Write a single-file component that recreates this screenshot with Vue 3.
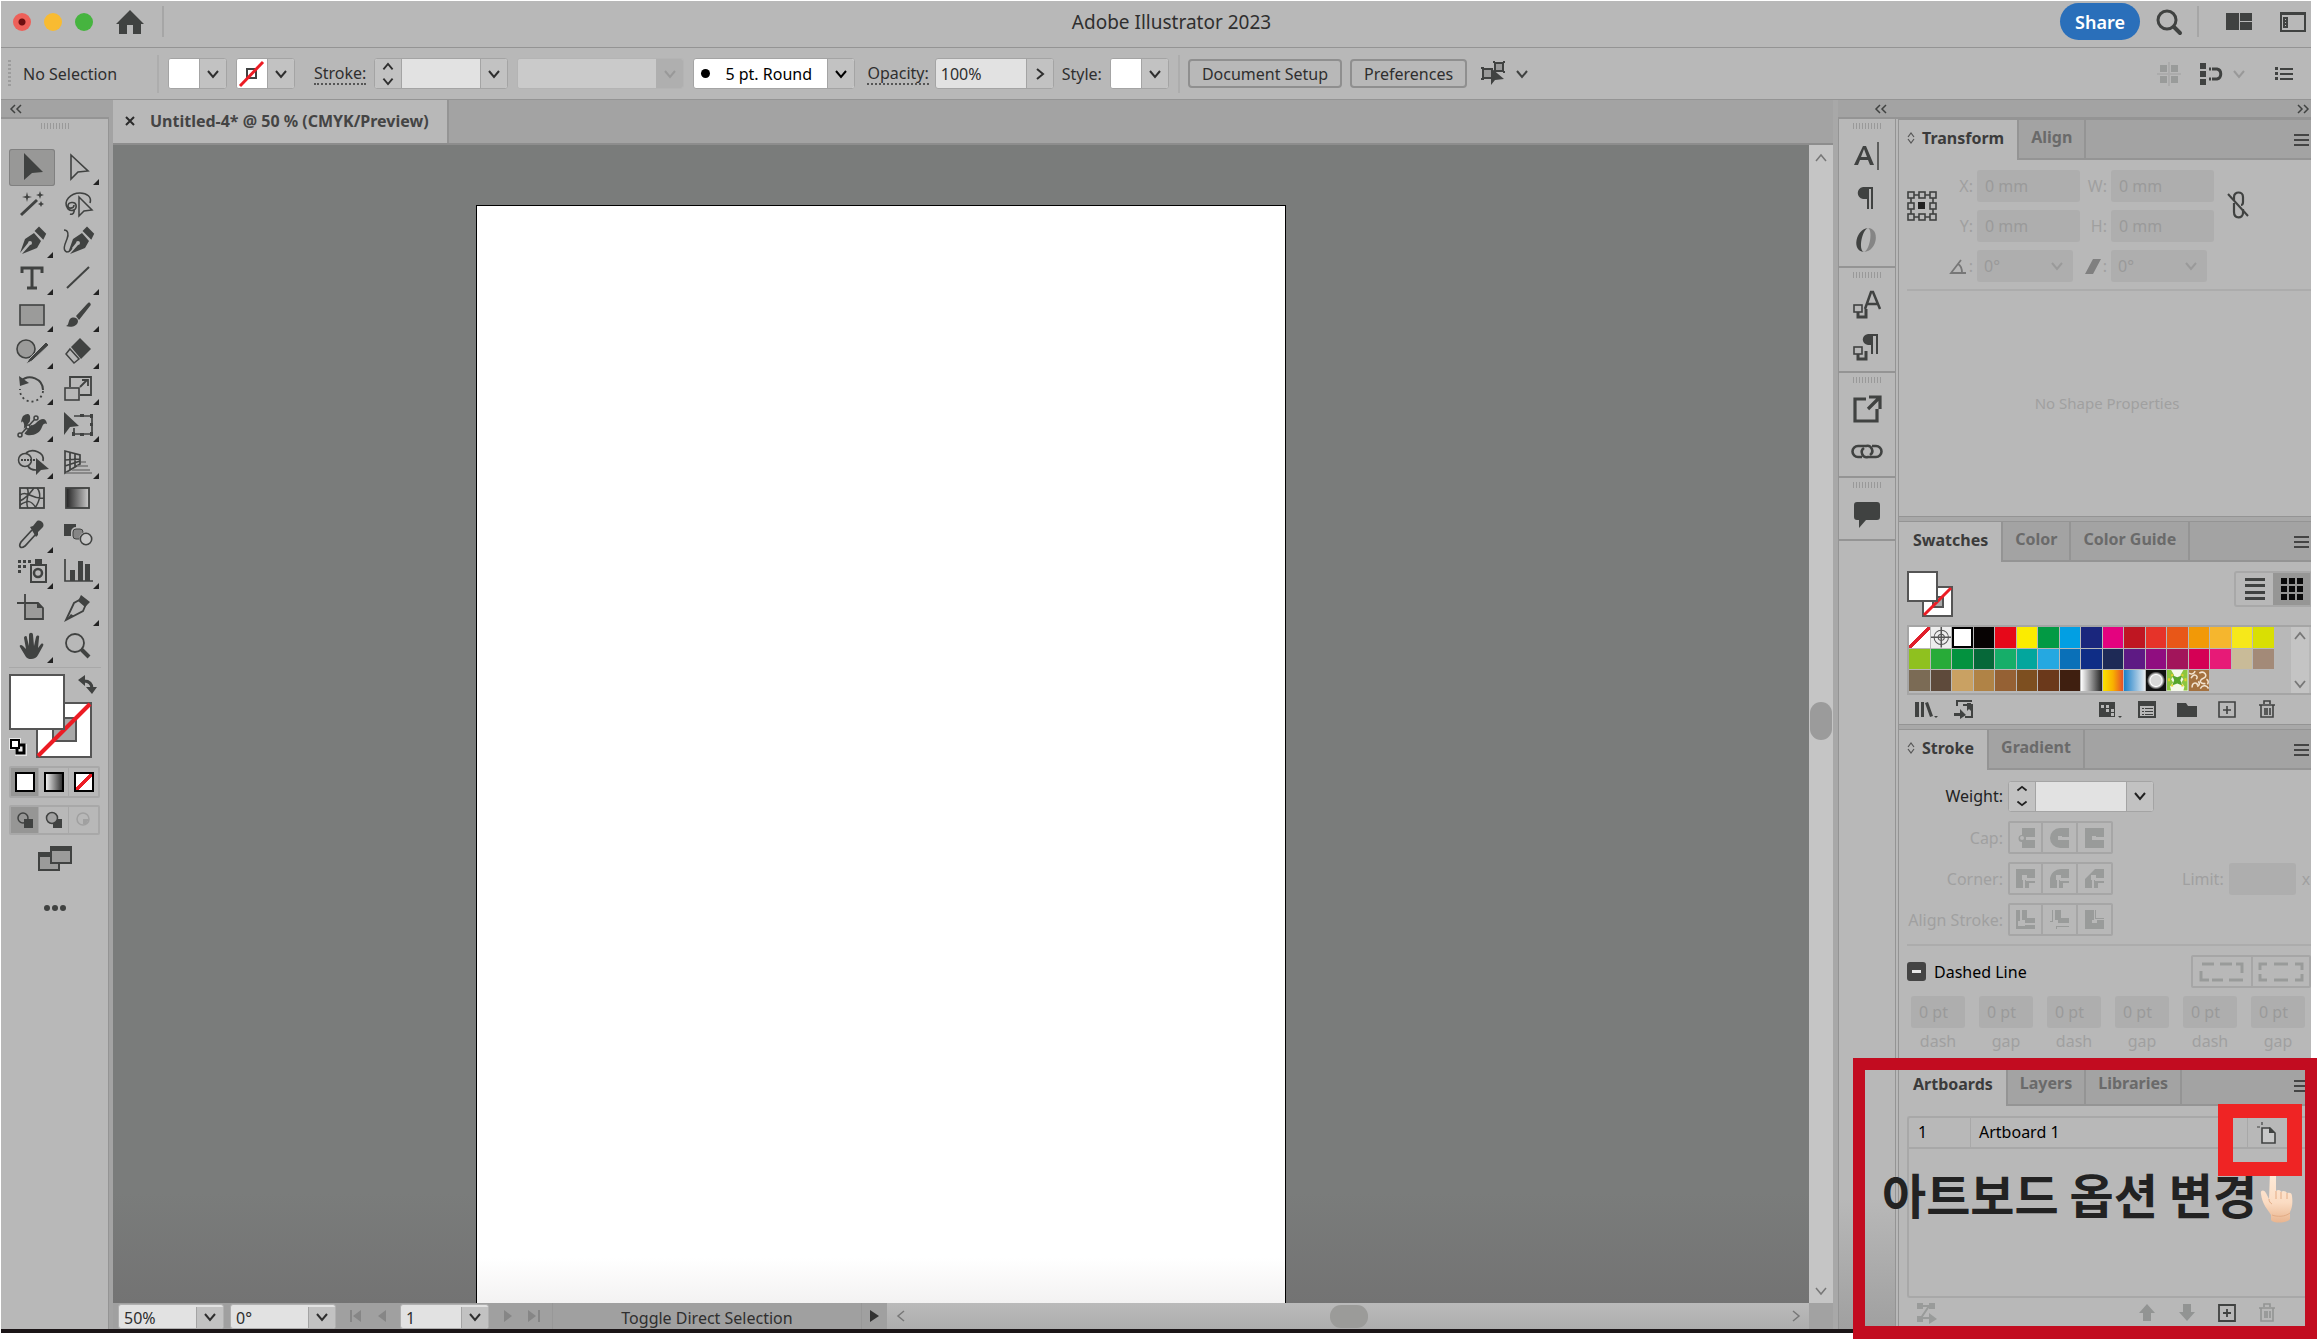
<script setup>
import { ref } from 'vue'

const chev = '<path d="M1 1l5 6 5-6" fill="none" stroke="currentColor" stroke-width="2"/>'

const D = '#404241'
const pen = '<path d="M19 9l7 8-4 7-15 6 8-9a2 2 0 1 0-2-2l-8 10 5-14z" fill="#404241"/><path d="M21 7l3-3 6 6-2 4z" fill="#404241" stroke="#404241" stroke-width="2"/>'

const tools = [
  { name: 'Selection', active: true, svg: `<path d="M9 3v27l8-7 11-1z" fill="${D}"/>` },
  { name: 'Direct Selection', more: true, svg: `<path d="M10 5v24l7-7 10-1z" fill="none" stroke="${D}" stroke-width="1.6"/>` },
  { name: 'Magic Wand', svg: `<path d="M6 28L22 13" stroke="${D}" stroke-width="3"/><path d="M12 5l1 4 4 1-4 1-1 4-1-4-4-1 4-1zM25 4l1 3 3 1-3 1-1 3-1-3-3-1 3-1zM26 14l1 2 2 1-2 1-1 2-1-2-2-1 2-1z" fill="${D}"/>` },
  { name: 'Lasso', svg: `<path d="M7 22C1 14 10 6 19 6c7 0 12 4 10 10M7 22c4 3 9 1 8-4-1-4-8-3-8 1 0 3 6 3 6-1M13 22c1 3-1 6-4 5" fill="none" stroke="${D}" stroke-width="1.6"/><path d="M18 10v19l5-5 8-1z" fill="#b8b8b8" stroke="${D}" stroke-width="1.5"/>` },
  { name: 'Pen', more: true, svg: pen },
  { name: 'Curvature', svg: `<g transform="translate(2 0)">${pen}</g><path d="M3 6c4 0 5 4 3 9S1 26 6 28c4 0 3-2 5-4" fill="none" stroke="${D}" stroke-width="1.5"/>` },
  { name: 'Type', more: true, svg: `<path d="M7 12V7h20v5M17 7v20M12 27h10" fill="none" stroke="${D}" stroke-width="3"/>` },
  { name: 'Line Segment', more: true, svg: `<path d="M6 27L28 6" stroke="${D}" stroke-width="2"/>` },
  { name: 'Rectangle', more: true, svg: `<rect x="5" y="7" width="24" height="20" fill="#9b9b9a" stroke="${D}" stroke-width="1.6"/>` },
  { name: 'Paintbrush', more: true, svg: `<path d="M29 5c1 1 1 2 0 3L18 22l-3-4L26 6c1-1 2-2 3-1z" fill="${D}"/><path d="M5 28c3-1 2-4 4-7 3-3 8-1 8 2 0 5-7 7-12 5z" fill="${D}"/>` },
  { name: 'Shaper', more: true, svg: `<circle cx="11" cy="15" r="9" fill="#9b9b9a" stroke="${D}" stroke-width="1.6"/><path d="M14 25L31 8l3 3-17 16-6 3z" fill="${D}" stroke="#b8b8b8"/>` },
  { name: 'Eraser', more: true, svg: `<path d="M10 13L19 4l11 11-10 10z" fill="${D}"/><path d="M9 15l9 10-5 4-8-9z" fill="none" stroke="${D}" stroke-width="1.5"/>` },
  { name: 'Rotate', more: true, svg: `<path d="M6 10c8-8 22-2 22 9" fill="none" stroke="${D}" stroke-width="2"/><path d="M4 5l1 10 9-3z" fill="${D}"/><path d="M28 20A11 11 0 0 1 5 18" fill="none" stroke="${D}" stroke-width="1.8" stroke-dasharray="2 3"/>` },
  { name: 'Scale', more: true, svg: `<path d="M9 16V6h21v18H19" fill="none" stroke="${D}" stroke-width="1.8"/><rect x="4" y="17" width="14" height="12" fill="none" stroke="${D}" stroke-width="1.6"/><path d="M19 16l7-7M21 9h6v6" fill="none" stroke="${D}" stroke-width="1.8"/>` },
  { name: 'Width', more: true, svg: `<path d="M8 8c5-4 8-2 7 4-1 5 2 7 6 3 5-5 10-6 11 1-1-1-4-1-5 3-2 6-8 9-15 8-6-2-2-7-3-11-1-3-2-3-3-1 0-3 1-5 2-7z" fill="${D}"/><path d="M6 27L20 10" stroke="#b8b8b8" stroke-width="3.5"/><path d="M6 26L20 11" stroke="${D}" stroke-width="1.5"/><g fill="#b8b8b8" stroke="${D}" stroke-width="1.5"><circle cx="5" cy="27" r="2"/><circle cx="13" cy="19" r="2"/><circle cx="21" cy="10" r="2"/></g>` },
  { name: 'Free Transform', more: true, svg: `<path d="M13 8h18v18H13v-6" fill="none" stroke="${D}" stroke-width="1.7"/><path d="M29 6h3v4h-3zM29 15h3v3h-3zM29 24h3v4h-3zM19 6h4v3h-4zM19 25h4v3h-4zM11 24h3v4h-3z" fill="${D}"/><path d="M3 4v23l6-8 9-1z" fill="${D}"/>` },
  { name: 'Shape Builder', more: true, svg: `<circle cx="10" cy="15" r="6.500" fill="none" stroke="${D}" stroke-width="1.5"/><path d="M11 8c6-5 19-1 17 8M13 21c1 2 4 4 8 4" fill="none" stroke="${D}" stroke-width="1.7"/><path d="M6 15h14" stroke="${D}" stroke-width="2" stroke-dasharray="2 1"/><path d="M21 13v17l5-5 8-1z" fill="${D}"/>` },
  { name: 'Perspective Grid', more: true, svg: `<path d="M4 6v22l15-9v-9zM4 15l15-1M4 21l15-5M9 7v18M14 9v13" fill="none" stroke="${D}" stroke-width="1.7"/><path d="M20 17h5M16 21h11M11 25h18M5 28h26" stroke="#777" stroke-width="1.5"/>` },
  { name: 'Mesh', svg: `<rect x="5" y="7" width="24" height="20" fill="none" stroke="${D}" stroke-width="1.8"/><path d="M12 7c4 6-3 12 1 20M22 7c5 6 2 14-2 20M5 14c8-5 12 5 24 3M5 24c8-5 11-5 16 3M5 20c8-4 10-8 14-13" fill="none" stroke="${D}" stroke-width="1.5"/>` },
  { name: 'Gradient', svg: `<defs><linearGradient id="gt"><stop offset="0" stop-color="#222"/><stop offset="1" stop-color="#ccc"/></linearGradient></defs><rect x="5" y="7" width="23" height="20" fill="url(#gt)" stroke="${D}" stroke-width="1.8"/>` },
  { name: 'Eyedropper', more: true, svg: `<path d="M17 12L6 24c-3 5 0 7 4 4l11-12" fill="none" stroke="${D}" stroke-width="1.7"/><path d="M15 9l3-1 4-5c4-2 8 3 6 6l-5 5 0 3-2 2z" fill="${D}"/>` },
  { name: 'Blend', svg: `<path d="M3 6h12v12H3z" fill="${D}"/><rect x="11" y="10" width="12" height="12" rx="4" fill="#858585" stroke="#b8b8b8" stroke-width="2"/><rect x="12" y="11" width="10" height="10" rx="3" fill="none" stroke="${D}"/><circle cx="25" cy="21" r="7" fill="#b8b8b8"/><circle cx="25" cy="21" r="5.700" fill="#c6c6c6" stroke="${D}" stroke-width="1.6"/>` },
  { name: 'Symbol Sprayer', more: true, svg: `<path d="M16 10h15v17H16z" fill="none" stroke="${D}" stroke-width="2"/><path d="M20 4h7v6h-7z" fill="${D}"/><circle cx="23" cy="18" r="4" fill="none" stroke="${D}" stroke-width="2.500"/><g fill="${D}"><path d="M3 5h3v3H3zM8 5h3v3H8zM13 5h3v3h-3zM3 10h3v3H3zM8 10h3v3H8zM3 15h3v3H3z"/></g>` },
  { name: 'Column Graph', more: true, svg: `<path d="M4 4v22h28" fill="none" stroke="${D}" stroke-width="1.700"/><path d="M9 15h5v11H9zM17 6h5v20h-5zM24 9h5v17h-5z" fill="${D}"/>` },
  { name: 'Artboard', svg: `<path d="M10 2v9M2 11h7" stroke="${D}" stroke-width="1.8"/><path d="M10 11h13l5 5v11H10z" fill="#9b9b9a" stroke="${D}" stroke-width="1.800"/><path d="M22 11v5h6z" fill="${D}"/>` },
  { name: 'Slice', more: true, svg: `<path d="M5 28l8-17 7-4 5 5-3 7z" fill="none" stroke="${D}" stroke-width="1.8"/><path d="M20 3l9 7-5 5-7-6zM5 28l5-6 3 2z" fill="${D}"/>` },
  { name: 'Hand', more: true, svg: `<path d="M11 28L5 18c-1-2 1-3 3-1l3 3L9 9c0-2 3-3 3 0l2 8V6c0-3 4-3 4 0l1 11 2-9c1-2 4-2 3 1l-1 10 3-4c2-1 3 0 2 2l-5 9c-2 5-10 5-12 2z" fill="${D}"/>` },
  { name: 'Zoom', svg: `<circle cx="14" cy="14" r="9" fill="none" stroke="${D}" stroke-width="1.8"/><path d="M20 20l8 8" stroke="${D}" stroke-width="4"/>` },
]

const strip = [
  [
    { name: 'Character', svg: `<path d="M4 26L13 7h3l8 19h-4l-2-5h-8l-2 5zM11 18h6l-3-8z" fill="${D}"/><path d="M28 3v28" stroke="${D}" stroke-width="1.5"/>` },
    { name: 'Paragraph', svg: `<path d="M16 6h7v22h-2V8h-2v20h-2V18h-4c-7-1-7-11 0-12z" fill="${D}"/>` },
    { name: 'OpenType', svg: `<path d="M18 5C6 6 1 28 14 29c-6-2-2-22 4-24z" fill="${D}"/><path d="M18 5c12 0 10 23-4 24 6-2 9-22 4-24z" fill="#858585"/>` },
  ],
  [
    { name: 'Character Styles', svg: `<path d="M8 22v7h8v-8" fill="none" stroke="${D}" stroke-width="3"/><rect x="4" y="17" width="8" height="7" fill="#b8b8b8" stroke="${D}" stroke-width="1.6"/><path d="M15 21l6-17h2l7 17M17 16h10" fill="none" stroke="${D}" stroke-width="2.500"/>` },
    { name: 'Paragraph Styles', svg: `<path d="M8 22v7h8v-8" fill="none" stroke="${D}" stroke-width="3"/><rect x="4" y="17" width="8" height="7" fill="#b8b8b8" stroke="${D}" stroke-width="1.6"/><path d="M18 4h10v20h-2V6h-3v18h-2V15h-3c-7-1-7-10 0-11z" fill="${D}"/>` },
  ],
  [
    { name: 'Asset Export', svg: `<path d="M16 6H5v22h22V16" fill="none" stroke="${D}" stroke-width="3.200"/><path d="M19 4h11v12M29 5L18 16" fill="none" stroke="${D}" stroke-width="3.200"/>` },
    { name: 'Links', svg: `<g fill="none" stroke="${D}" stroke-width="2.600"><path d="M12 22H8a5 5 0 0 1 0-11h8a5 5 0 0 1 4 9"/><path d="M22 11h4a5 5 0 0 1 0 11h-8a5 5 0 0 1-4-9"/></g>` },
  ],
  [
    { name: 'Comments', svg: `<path d="M7 4h20a3 3 0 0 1 3 3v12a3 3 0 0 1-3 3H16l-7 8v-8H7a3 3 0 0 1-3-3V7a3 3 0 0 1 3-3z" fill="${D}"/>` },
  ],
]

const swatches = [
  'none', 'reg', '#ffffff', '#070303', '#e60819', '#fbec00', '#029a44', '#029fe3', '#1a267d', '#e4027f', '#bf1622', '#e63329', '#e85718', '#f29907', '#f5b62e', '#f6e81a', '#d9df03',
  '#8fc11f', '#28ab38', '#03923f', '#066839', '#16ae69', '#03a69d', '#25a8e1', '#0a70b8', '#0f2d86', '#1e2a56', '#5e1a84', '#900d80', '#a2155b', '#d50055', '#e71a77', '#c9bb98', '#a38a78',
  '#7b6b55', '#5e4a3b', '#c9a163', '#b08346', '#956134', '#7d4f20', '#6b391b', '#3f1f10', 'fade', 'sun', 'sky', 'dot', 'leaf', 'swirl',
]
const isHex = (s) => s.startsWith('#')

const strokeRows = [
  { label: 'Cap:', icons: [
    ['Butt Cap', '<path d="M6 1h13v9H10v3h9v8H6v-6a3 3 0 1 1 0-7z"/><circle cx="6" cy="11" r="2" fill="#b8b8b8"/>'],
    ['Round Cap', '<path d="M19 1h-9a10 10 0 0 0 0 20h9v-8H10v-3h9z"/><path d="M8 9h4v4H8z" fill="#b8b8b8"/>'],
    ['Projecting Cap', '<path d="M0 1h19v9H10v3h9v8H0z"/><path d="M7 9h4v4H7z" fill="#b8b8b8"/>']] },
  { label: 'Corner:', icons: [
    ['Miter Join', '<path d="M0 1h19v9H10v3h9v2h-6v5H9v-8H7v8H0z"/><path d="M6 7h5v5H6z" fill="#b8b8b8"/>'],
    ['Round Join', '<path d="M0 20v-8A11 11 0 0 1 12 1h7v9H10v3h9v2h-6v5H9v-8H7v8z"/><path d="M6 7h5v5H6z" fill="#b8b8b8"/>'],
    ['Bevel Join', '<path d="M0 20v-9L10 1h9v9H10v3h9v2h-6v5H9v-8H7v8z"/><path d="M6 7h5v5H6z" fill="#b8b8b8"/>']] },
  { label: 'Align Stroke:', icons: [
    ['Align Center', '<path d="M0 1h4v11H2v5h7v-1h10v4H0zM6 1h5v8h8v5H9v-3H6z"/>'],
    ['Align Inside', '<path d="M5 1h6v8h8v5H8v-3H5zM2 1h1v12h-3v7h6v-3h13v1H7v2H0v-8h2z"/>'],
    ['Align Outside', '<path d="M0 1h9v10H7v3h5v-3h7v9H0zM10 1h1v8h8v1h-9z"/>']] },
]
const dashes = ['dash', 'gap', 'dash', 'gap', 'dash', 'gap']

const stroke = ref('')
const weight = ref('')
const opacity = ref('100%')

const swatchFooter = [
  ['Swatch Libraries', '<path d="M1 2h4v15H1zM7 2h3v15H7zM11 3l3-1 5 14-3 1z"/>'],
  ['Add to Library', '<path d="M3 6V1h15M9 5h9v12h-7" fill="none" stroke="currentColor" stroke-width="2"/><path d="M0 13h6V9l6 6-6 4v-3H0zM13 3h4v8l-2-2-2 2z"/>'],
  ['Show Swatch Kinds', '<path d="M1 2h16v15H1z"/><path d="M3 5h3v3H3zM8 5h3v3H8zM13 9h3v3h-3zM8 9h3v3H8zM13 13h3v3h-3z" fill="#b8b8b8"/>'],
  ['Swatch Options', '<path d="M1 2h16v15H1z" fill="none" stroke="currentColor" stroke-width="2"/><path d="M1 2h16v4H1zM4 8h2v1H4zM7 8h8v1H7zM4 11h2v1H4zM7 11h8v1H7zM4 14h2v1H4zM7 14h8v1H7z"/>'],
  ['New Color Group', '<path d="M-1 3h9l2 3h9v11H-1z"/>'],
  ['New Swatch', '<path d="M1 2h16v15H1zM9 6v8M5 10h8" fill="none" stroke="currentColor" stroke-width="1.600"/>'],
  ['Delete Swatch', '<path d="M1 5h16M6 4V1h6v3M3 5v12h12V5M7 8v7M9 8v7M12 8v7" fill="none" stroke="currentColor" stroke-width="1.600"/>'],
]
</script>

<template>
  <div class="app">
    <header class="title">
      <div class="lights"><i class="close"></i><i class="min"></i><i class="max"></i></div>
      <button class="home" aria-label="Home"><svg width="28" height="26" viewBox="0 0 28 26"><path d="M14 1l14 14h-3v10h-8v-9h-6v9H3V15H0z" :fill="D" /></svg></button>
      <span class="vr"></span>
      <h1>Adobe Illustrator 2023</h1>
      <div class="title-right">
        <button class="share">Share</button>
        <button class="search" aria-label="Search"><svg width="26" height="26" viewBox="0 0 26 26"><circle cx="11" cy="11" r="9" fill="none" :stroke="D" stroke-width="3" /><path d="M18 18l6 6" :stroke="D" stroke-width="4" stroke-linecap="round" /></svg></button>
        <span class="vr"></span>
        <button class="workspace" aria-label="Arrange Documents"><svg width="26" height="18" viewBox="0 0 26 18"><path d="M0 0h13v17H0zM14 0h12v8H14zM14 9h12v8H14z" :fill="D" /></svg></button>
        <button class="panelbtn" aria-label="Switch Workspace"><svg width="26" height="20" viewBox="0 0 26 20"><path d="M1 1h24v18H1z" fill="none" :stroke="D" stroke-width="2" /><path d="M1 0h24v3H1zM3 5h5v11H3z" :fill="D" /><path d="M5 7h1v1H5zM5 10h1v1H5zM5 13h1v1H5z" fill="#b8b8b8" /></svg></button>
      </div>
    </header>

    <div class="control">
      <span class="grip-v"></span>
      <span class="nosel">No Selection</span>
      <span class="vr tall"></span>
      <div class="combo sw"><button class="chip" aria-label="Fill"></button><button class="dd" aria-label="Fill options"><svg viewBox="0 0 12 8" v-html="chev"></svg></button></div>
      <div class="combo sw"><button class="chip" aria-label="Stroke color"><svg width="30" height="29" viewBox="0 0 30 29"><path d="M10 10h9v9h-9z" fill="none" :stroke="D" stroke-width="2" /><path d="M3 27L26 3" stroke="#ec1c24" stroke-width="3" /></svg></button><button class="dd" aria-label="Stroke options"><svg viewBox="0 0 12 8" v-html="chev"></svg></button></div>
      <label class="dotted l-stroke" for="sw">Stroke:</label>
      <div class="combo w-stroke"><button class="step" aria-label="Step stroke weight"><svg viewBox="0 0 12 24"><path d="M1 7l5-6 5 6M1 17l5 6 5-6" fill="none" stroke="currentColor" stroke-width="2" /></svg></button><input id="sw" v-model="stroke"><button class="dd" aria-label="Stroke weights"><svg viewBox="0 0 12 8" v-html="chev"></svg></button></div>
      <div class="combo off w-profile"><input aria-label="Width profile" disabled><button class="dd" aria-label="Profiles" disabled><svg viewBox="0 0 12 8" v-html="chev"></svg></button></div>
      <div class="combo w-brush"><i class="bullet"></i><select aria-label="Brush definition"><option>5 pt. Round</option></select><span class="dd"><svg viewBox="0 0 12 8" v-html="chev"></svg></span></div>
      <label class="dotted l-opacity" for="op">Opacity:</label>
      <div class="combo w-opacity"><input id="op" v-model="opacity"><button class="dd" aria-label="Opacity slider"><svg class="side" viewBox="0 0 8 12"><path d="M1 1l6 5-6 5" fill="none" stroke="currentColor" stroke-width="2" /></svg></button></div>
      <span class="l-style">Style:</span>
      <div class="combo sw"><button class="chip" aria-label="Style"></button><button class="dd" aria-label="Graphic styles"><svg viewBox="0 0 12 8" v-html="chev"></svg></button></div>
      <span class="vr tall"></span>
      <button class="plain b-doc">Document Setup</button>
      <button class="plain b-pref">Preferences</button>
      <button class="isolate" aria-label="Select Similar"><svg width="50" height="28" viewBox="0 0 50 28"><path d="M2 9h9v9H2zM14 3h8v8h-8z" fill="#999" :stroke="D" stroke-width="2" /><path d="M0 7h3v2H0zM0 18h3v2H0zM12 1h2v2h-2zM22 1h2v2h-2zM22 11h2v2h-2z" :fill="D" /><path d="M10 8v17l4-5 9-1z" :fill="D" /><path d="M36 11l5 6 5-6" fill="none" :stroke="D" stroke-width="2" /></svg></button>
      <div class="control-right">
        <svg width="24" height="24" viewBox="0 0 24 24"><path d="M3 3h7v7H3zM14 3h7v7h-7zM3 14h7v7H3zM14 14h7v7h-7z" fill="#999b9a" /><path d="M12 0v24M0 12h24" stroke="#acacac" stroke-width="2" /></svg>
        <svg width="24" height="24" viewBox="0 0 24 24"><path d="M1 1h6v6H1zM1 9h6v6H1zM1 17h6v6H1z" :fill="D" /><path d="M10 7h8c5 1 5 9 0 10h-8" fill="none" :stroke="D" stroke-width="3" /><path d="M12 5h1v4h-1zM12 15h1v4h-1z" fill="#b8b8b8" /></svg>
        <svg class="faint" width="12" height="8" viewBox="0 0 12 8" v-html="chev"></svg>
        <svg class="list" width="18" height="14" viewBox="0 0 18 14"><path d="M0 0h3v3H0zM0 5h3v3H0zM0 10h3v3H0zM5 1h13v2H5zM5 6h13v2H5zM5 11h13v2H5z" :fill="D" /></svg>
      </div>
    </div>

    <div class="main">
      <aside class="toolbar">
        <div class="collapse"><svg width="12" height="8" viewBox="0 0 12 8"><path d="M5 0L1 4l4 4M11 0L7 4l4 4" fill="none" :stroke="D" stroke-width="1.5" /></svg></div>
        <span class="grip"></span>
        <div class="tools">
          <button v-for="t in tools" :key="t.name" :aria-label="t.name" :class="{ active: t.active, more: t.more }"><svg width="34" height="34" viewBox="0 0 34 34" v-html="t.svg"></svg></button>
        </div>
        <div class="colors">
          <svg width="90" height="86" viewBox="0 0 90 86">
            <rect x="28" y="29" width="54" height="54" fill="#fff" stroke="#555" stroke-width="2" /><rect x="44" y="44" width="23" height="23" fill="#a8a8a8" stroke="#555" stroke-width="2" /><path d="M29 82L81 30" stroke="#ec1c24" stroke-width="4" />
            <rect x="1" y="1" width="54" height="54" fill="#fff" stroke="#555" stroke-width="2" />
            <path d="M75 7c6 0 8 3 8 8" fill="none" :stroke="D" stroke-width="3" /><path d="M69 6l7-5v11zM77 13h11l-5 7z" :fill="D" />
            <path d="M0 64h12v6h6v12H6v-6H0z" fill="#e6e6e6" /><path d="M8 71h7v8H8z" fill="none" stroke="#000" stroke-width="3" /><path d="M2 66h8v8H2z" fill="#fff" stroke="#000" stroke-width="2" />
          </svg>
        </div>
        <div class="modes">
          <button class="active" aria-label="Color"><i class="m-solid"></i></button><button aria-label="Gradient"><i class="m-grad"></i></button><button aria-label="None"><i class="m-none"></i></button>
        </div>
        <div class="modes draw">
          <button class="active" aria-label="Draw Normal"><svg width="16" height="16" viewBox="0 0 16 16"><circle cx="6" cy="6" r="5" fill="none" :stroke="D" stroke-width="1.500" /><path d="M7 7h9v9H7z" :fill="D" /></svg></button>
          <button aria-label="Draw Behind"><svg width="16" height="16" viewBox="0 0 16 16"><path d="M7 7h9v9H7z" :fill="D" /><circle cx="6" cy="6" r="5.500" fill="#a2a2a2" :stroke="D" stroke-width="1.500" /></svg></button>
          <button aria-label="Draw Inside" disabled><svg width="16" height="16" viewBox="0 0 16 16"><circle cx="7" cy="7" r="6" fill="none" stroke="#a0a0a0" stroke-width="1.500" /><path d="M7 7h6l-3 5H7z" fill="#a0a0a0" /></svg></button>
        </div>
        <button class="screen" aria-label="Screen Mode"><svg width="34" height="26" viewBox="0 0 34 26"><path d="M1 8h20v16H1z" fill="#9b9b9a" :stroke="D" stroke-width="2" /><path d="M0 6h12v5H0z" :fill="D" /><path d="M13 2h20v15H13z" fill="#9b9b9a" :stroke="D" stroke-width="2" /><path d="M12 0h22v5H12z" :fill="D" /></svg></button>
        <button class="dots" aria-label="Edit Toolbar"><i></i><i></i><i></i></button>
      </aside>

      <section class="doc">
        <div class="tabs"><div class="tab"><button aria-label="Close"><svg width="10" height="10" viewBox="0 0 10 10"><path d="M1 1l8 8M9 1L1 9" stroke="#2b2b2b" stroke-width="2" /></svg></button><span>Untitled-4* @ 50 % (CMYK/Preview)</span></div></div>
        <div class="view">
          <div class="canvas"><div class="artboard"></div></div>
          <div class="vscroll"><svg width="12" height="8" viewBox="0 0 12 8"><path d="M1 7l5-6 5 6" fill="none" stroke="#777" stroke-width="1.500" /></svg><i></i><svg width="12" height="8" viewBox="0 0 12 8"><path d="M1 1l5 6 5-6" fill="none" stroke="#777" stroke-width="1.500" /></svg></div>
        </div>
        <div class="status">
          <div class="combo s1"><select aria-label="Zoom level"><option>50%</option></select><span class="dd"><svg viewBox="0 0 12 8" v-html="chev"></svg></span></div>
          <div class="combo s1"><select aria-label="Rotate view"><option>0°</option></select><span class="dd"><svg viewBox="0 0 12 8" v-html="chev"></svg></span></div>
          <svg class="nav" width="38" height="12" viewBox="0 0 38 12"><path d="M1 0h2v12H1zM12 0v12L4 6zM37 0v12l-8-6z" fill="#868686" /></svg>
          <div class="combo s2"><select aria-label="Artboard number"><option>1</option></select><span class="dd"><svg viewBox="0 0 12 8" v-html="chev"></svg></span></div>
          <svg class="nav" width="38" height="12" viewBox="0 0 38 12"><path d="M1 0v12l8-6zM25 0v12l8-6zM35 0h2v12h-2z" fill="#868686" /></svg>
          <span class="tool-name">Toggle Direct Selection</span>
          <svg class="play" width="9" height="12" viewBox="0 0 9 12"><path d="M0 0v12l9-6z" fill="#333" /></svg>
          <div class="hscroll"><svg width="8" height="12" viewBox="0 0 8 12"><path d="M7 1L1 6l6 5" fill="none" stroke="#777" stroke-width="1.500" /></svg><i></i><svg width="8" height="12" viewBox="0 0 8 12"><path d="M1 1l6 5-6 5" fill="none" stroke="#777" stroke-width="1.500" /></svg></div>
        </div>
      </section>

      <aside class="dock">
        <div class="collapse both"><svg width="12" height="8" viewBox="0 0 12 8"><path d="M5 0L1 4l4 4M11 0L7 4l4 4" fill="none" :stroke="D" stroke-width="1.5" /></svg><svg width="12" height="8" viewBox="0 0 12 8"><path d="M1 0l4 4-4 4M7 0l4 4-4 4" fill="none" :stroke="D" stroke-width="1.5" /></svg></div>
        <div class="dock-cols">
          <nav class="strip">
            <div v-for="(g, i) in strip" :key="i" class="group"><span class="grip"></span><button v-for="b in g" :key="b.name" :aria-label="b.name"><svg width="34" height="34" viewBox="0 0 34 34" v-html="b.svg"></svg></button></div>
          </nav>
          <div class="panels">
            <section class="panel transform">
              <div class="ptabs"><button class="on"><svg width="8" height="12" viewBox="0 0 8 12"><path d="M1 5l3-4 3 4M1 7l3 4 3-4" fill="none" stroke="#555" stroke-width="1.200" /></svg>Transform</button><button>Align</button><i class="menu"></i></div>
              <div class="tbody">
                <svg width="30" height="30" viewBox="0 0 30 30"><path d="M4 4h22v22H4z" fill="none" :stroke="D" stroke-width="1.600" /><g fill="#b8b8b8" :stroke="D" stroke-width="1.600"><rect v-for="n in [0, 1, 2, 3, 5, 6, 7, 8]" :key="n" :x="1 + (n % 3) * 11" :y="1 + Math.floor(n / 3) * 11" width="6" height="6" /></g><path d="M9 9h12v12H9z" fill="#b8b8b8" /><path d="M11 11h7v7h-7z" fill="#222" /></svg>
                <div class="tgrid">
                  <label for="tx">X:</label><input id="tx" value="0 mm" disabled><label for="tw">W:</label><input id="tw" value="0 mm" disabled>
                  <label for="ty">Y:</label><input id="ty" value="0 mm" disabled><label for="th">H:</label><input id="th" value="0 mm" disabled>
                  <label for="ta"><svg width="18" height="15" viewBox="0 0 18 15"><path d="M17 14H2L12 1M9 5c4 2 4 6 4 9" fill="none" stroke="#777" stroke-width="1.800" /></svg>:</label>
                  <div class="drop"><select id="ta" disabled><option>0°</option></select><svg width="12" height="8" viewBox="0 0 12 8" v-html="chev"></svg></div>
                  <label for="ts"><svg width="16" height="15" viewBox="0 0 16 15"><path d="M8 0h8L8 15H0z" fill="#808080" /></svg>:</label>
                  <div class="drop"><select id="ts" disabled><option>0°</option></select><svg width="12" height="8" viewBox="0 0 12 8" v-html="chev"></svg></div>
                </div>
                <svg class="unlink" width="24" height="28" viewBox="0 0 24 28"><path d="M8 9V6c0-6 9-6 9 0v5c0 2-1 3-2 3M8 12v9c0 7 9 7 9 1v-4" fill="none" :stroke="D" stroke-width="2.200" /><path d="M2 3l20 22" :stroke="D" stroke-width="2" /></svg>
              </div>
              <p class="empty">No Shape Properties</p>
            </section>

            <section class="panel swatches">
              <div class="ptabs"><button class="on">Swatches</button><button>Color</button><button>Color Guide</button><i class="menu"></i></div>
              <div class="shead">
                <svg width="46" height="46" viewBox="0 0 46 46"><rect x="16" y="16" width="29" height="29" fill="#fff" stroke="#555" stroke-width="2" /><rect x="26" y="26" width="10" height="10" fill="#a8a8a8" stroke="#555" stroke-width="2" /><path d="M17 44L44 17" stroke="#ec1c24" stroke-width="3" /><rect x="1" y="1" width="29" height="29" fill="#fff" stroke="#555" stroke-width="2" /></svg>
                <div class="views"><button aria-label="List view"><svg width="20" height="22" viewBox="0 0 20 22"><path d="M0 0h20v3H0zM0 6h20v3H0zM0 13h20v3H0zM0 19h20v3H0z" :fill="D" /></svg></button><button class="active" aria-label="Thumbnail view"><svg width="22" height="22" viewBox="0 0 22 22"><path d="M0 0h6v6H0zM8 0h6v6H8zM16 0h6v6h-6zM0 8h6v6H0zM8 8h6v6H8zM16 8h6v6h-6zM0 16h6v6H0zM8 16h6v6H8zM16 16h6v6h-6z" fill="#0a0a0a" /></svg></button></div>
              </div>
              <div class="sgrid">
                <div class="chips"><i v-for="(s, i) in swatches" :key="i" :class="[isHex(s) ? '' : s, { picked: i === 2 }]" :style="isHex(s) ? { background: s } : null"><svg v-if="s === 'reg'" viewBox="0 0 20 20"><circle cx="10" cy="10" r="7" fill="none" stroke="#555" /><circle cx="10" cy="10" r="3" fill="none" stroke="#555" /><path d="M10 0v20M0 10h20" stroke="#555" stroke-width="1.500" /></svg><svg v-if="s === 'swirl'" viewBox="0 0 20 20"><path d="M2 8c3-6 8-2 5 1M10 3c5-3 9 3 4 5s-3 6 2 5M3 17c0-6 6-5 5-2M11 18c3-5 7-2 8 0M0 3c3 2 5 0 6-2M9 11c2 2 1 4-1 5M17 9c2 1 2 3 1 5" fill="none" stroke="#f2e3d0" stroke-width="1.500" /></svg><svg v-if="s === 'leaf'" viewBox="0 0 20 20"><path d="M0 0h4l3 5-3 4 2 3-3 4 1 4H0zM20 0h-4l-3 5 3 4-2 3 3 4-1 4h4z" fill="#8cc63f" /><path d="M5 5l5 2 5-2-2 5 2 5-5-2-5 2 2-5z" fill="#54a52c" /><path d="M4 4h2v2H4zM14 4h2v2h-2zM4 14h2v2H4zM14 14h2v2h-2zM1 8h2v3H1zM17 8h2v3h-2z" fill="#e6cf2e" /></svg></i></div>
                <div class="mini"><svg width="12" height="8" viewBox="0 0 12 8"><path d="M1 7l5-6 5 6" fill="none" stroke="#777" stroke-width="1.800" /></svg><svg width="12" height="8" viewBox="0 0 12 8"><path d="M1 1l5 6 5-6" fill="none" stroke="#777" stroke-width="1.800" /></svg></div>
              </div>
              <div class="pfoot"><button v-for="f in swatchFooter" :key="f[0]" :aria-label="f[0]"><svg width="20" height="20" viewBox="0 0 20 20" fill="currentColor" v-html="f[1]"></svg></button></div>
            </section>

            <section class="panel strokep">
              <div class="ptabs"><button class="on"><svg width="8" height="12" viewBox="0 0 8 12"><path d="M1 5l3-4 3 4M1 7l3 4 3-4" fill="none" stroke="#555" stroke-width="1.200" /></svg>Stroke</button><button>Gradient</button><i class="menu"></i></div>
              <div class="srow"><label for="wt" class="dark">Weight:</label><div class="combo w-weight"><button class="step" aria-label="Step weight"><svg viewBox="0 0 12 24"><path d="M1 6l5-4 5 4M1 18l5 4 5-4" fill="none" stroke="currentColor" stroke-width="2" /></svg></button><input id="wt" v-model="weight"><button class="dd" aria-label="Weights"><svg viewBox="0 0 12 8" v-html="chev"></svg></button></div></div>
              <div v-for="r in strokeRows" :key="r.label" class="srow"><span class="lab">{{ r.label }}</span><div class="trio"><button v-for="b in r.icons" :key="b[0]" :aria-label="b[0]" disabled><svg width="20" height="22" viewBox="0 0 20 22" fill="#999b9a" v-html="b[1]"></svg></button></div><template v-if="r.label === 'Corner:'"><label class="limit" for="lim">Limit:</label><input id="lim" class="limit-in" disabled><span class="times">x</span></template></div>
              <div class="dline">
                <label class="dark"><input type="checkbox">Dashed Line</label>
                <div class="duo"><button disabled aria-label="Preserve exact dashes"><svg width="44" height="18" viewBox="0 0 44 18"><path d="M1 8v9h8M2 1h12M20 1h12M36 1h6v9M12 17h11M29 17h14" fill="none" stroke="#999b9a" stroke-width="3" /></svg></button><button disabled aria-label="Align dashes to corners"><svg width="44" height="18" viewBox="0 0 44 18"><path d="M8 1H1v6M1 11v6h7M15 1h14M15 17h14M36 1h7v6M43 11v6h-7" fill="none" stroke="#999b9a" stroke-width="3" /></svg></button></div>
              </div>
              <div class="dashes"><label v-for="(d, i) in dashes" :key="i"><input value="0 pt" disabled>{{ d }}</label></div>
            </section>

            <section class="panel artboards">
              <div class="ptabs"><button class="on">Artboards</button><button>Layers</button><button>Libraries</button><i class="menu"></i></div>
              <div class="alist">
                <div class="arow"><span class="num">1</span><span class="name">Artboard 1</span><button aria-label="Artboard Options"><svg width="20" height="22" viewBox="0 0 20 22"><path d="M5 6h8l5 5v10H5z" fill="#c8c8c8" :stroke="D" stroke-width="1.600" /><path d="M12 5v6h6z" :fill="D" /><path d="M5 0v3M0 5h3" :stroke="D" stroke-width="1.200" /></svg></button></div>
              </div>
              <div class="afoot">
                <svg width="20" height="22" viewBox="0 0 20 22"><path d="M0 1h6v6H0zM12 1h6v6h-6zM0 14h6v6H0zM12 11l8 6-8 5z" fill="#999b9a" /><path d="M6 4h6L4 16h9" fill="none" stroke="#999b9a" stroke-width="2" /></svg>
                <span class="push"></span>
                <svg width="18" height="18" viewBox="0 0 18 18"><path d="M9 0l8 9h-4v8H5V9H1z" fill="#929493" /></svg>
                <svg width="18" height="18" viewBox="0 0 18 18"><path d="M9 17l8-9h-4V0H5v8H1z" fill="#929493" /></svg>
                <button aria-label="New Artboard"><svg width="18" height="18" viewBox="0 0 18 18"><path d="M1 1h16v16H1zM9 5v8M5 9h8" fill="none" :stroke="D" stroke-width="1.800" /></svg></button>
                <svg width="18" height="20" viewBox="0 0 18 20"><path d="M1 5h16M6 4V1h6v3M3 5v13h12V5M7 8v7M9 8v7M12 8v7" fill="none" stroke="#929493" stroke-width="1.600" /></svg>
              </div>
            </section>
          </div>
        </div>
      </aside>
    </div>
  </div>

  <div class="callout">
    <p>아트보드 옵션 변경</p>
    <svg class="finger" width="34" height="52" viewBox="0 0 34 52"><defs><linearGradient id="skin" x1="0" y1="0" x2="0" y2="1"><stop offset="0" stop-color="#fdebd9" /><stop offset=".6" stop-color="#fbdcc3" /><stop offset="1" stop-color="#e9b58f" /></linearGradient></defs><path d="M10 0h4c2 0 2 1 2 3v16c2-2 5-1 5 1 2-2 5-1 6 1 3-1 5 0 5 3 1 7 0 12-2 16v7c-2 4-16 5-19 1v-5C8 38 2 32 1 22c-1-4 3-5 5-1l3 6z" fill="url(#skin)" /><path d="M16 19v8M21 20v7M27 21v6M9 27c0 2 1 4 3 5M12 43c5 2 13 2 18-2" fill="none" stroke="#e3ac86" stroke-width="1" /></svg>
    <div class="focus"></div>
  </div>
</template>

<style>
html, body { background: #fff; }
body { margin: 0; overflow: hidden; }
</style>

<style scoped>
* { box-sizing: border-box; }
.app, .callout { font-family: "Noto Sans", "Open Sans", sans-serif; font-size: 16px; color: #2f2f2f; }
button, input, select { font: inherit; color: inherit; margin: 0; padding: 0; border: 0; background: none; border-radius: 0; appearance: none; min-width: 0; opacity: 1; }
button { display: flex; align-items: center; justify-content: center; white-space: nowrap; }
svg { display: block; flex: none; overflow: visible; }
label, span { white-space: nowrap; }

.app { display: flex; flex-direction: column; margin: 1px 7px 0 1px; height: calc(100vh - 7px); background: #b8b8b8; border-bottom: 4px solid #1b1517; overflow: hidden; }
.vr { width: 2px; height: 31px; background: #a6a6a6; }
.vr.tall { height: 38px; background: #adadad; }

.title { position: relative; display: flex; align-items: center; height: 47px; padding-bottom: 5px; border-bottom: 1px solid #949494; flex: none; }
.lights { display: flex; gap: 13px; margin-left: 12px; }
.lights i { width: 18px; height: 18px; border-radius: 50%; }
.lights .close { background: radial-gradient(circle, #6d0f10 3px, #ed6059 4px); }
.lights .min { background: #f8bb31; }
.lights .max { background: #46b43f; }
.home { margin: 0 18px 0 23px; }
h1 { position: absolute; left: 0; right: 140px; top: 0; margin: 0; line-height: 42px; padding-left: 171px; text-align: center; font-size: 19px; font-weight: 400; pointer-events: none; }
.title-right { margin-left: auto; display: flex; align-items: center; padding-right: 5px; }
.share { width: 80px; height: 37px; border-radius: 19px; background: #2a6fba; color: #fff; font-size: 18px; font-weight: 600; }
.search { margin: 0 15px 0 16px; }
.workspace { margin: 0 28px 0 27px; }

.control { display: flex; align-items: center; height: 52px; border-bottom: 1px solid #949494; flex: none; }
.grip-v { width: 3px; height: 28px; margin: 0 12px 0 7px; background: repeating-linear-gradient(#9c9c9c 0 2px, transparent 2px 4px); }
.nosel { width: 134px; }
.control .vr + .combo { margin-left: 9px; }
.control .vr + .plain { margin-left: 8px; }
.combo { position: relative; display: flex; height: 31px; border: 1px solid #a4a4a4; border-radius: 3px; background: #e2e2e2; overflow: hidden; flex: none; }
.combo input, .combo select { flex: 1; padding-left: 5px; height: 100%; }
.combo .dd, .combo .step { width: 27px; flex: none; background: #c2c2c2; border-left: 1px solid #a4a4a4; display: flex; align-items: center; justify-content: center; pointer-events: none; }
.combo .step { border-left: 0; border-right: 1px solid #a4a4a4; }
.dd svg { width: 12px; height: 8px; }
.dd svg.side { width: 8px; height: 12px; }
.step svg { width: 12px; height: 22px; }
.chip { width: 30px; background: #fff; }
.combo.sw + .combo.sw { margin-left: 9px; }
.dotted { border-bottom: 2px dotted #555; line-height: 20px; }
.l-stroke { margin: 0 8px 0 19px; }
.w-stroke { width: 134px; }
.w-profile { width: 167px; margin: 0 9px; }
.combo.off { background: #cacaca; border-color: #b4b4b4; color: #999; }
.combo.off input { background: #cacaca; }
.combo.off .dd { background: #afafaf; border-color: #afafaf; }
.w-brush { width: 162px; background: #fff; color: #000; }
.w-brush select { padding-left: 15px; }
.bullet { width: 9px; height: 9px; margin: 10px 0 0 7px; border-radius: 50%; background: #000; }
.l-opacity { margin: 0 6px 0 12px; }
.w-opacity { width: 119px; }
.l-style { margin: 0 8px; }
.l-style + .combo { margin-right: 9px; }
.plain { height: 29px; border: 2px solid #8f8f8f; border-radius: 4px; padding: 0 12px; }
.b-pref { margin: 0 14px 0 8px; }
.control-right { margin-left: auto; display: flex; align-items: center; gap: 18px; padding-right: 18px; }
.control-right .faint { color: #999; margin-left: -8px; }
.control-right .list { margin-left: 12px; }

.main { flex: 1; display: flex; min-height: 0; }
.toolbar { width: 112px; flex: none; border-right: 4px solid #a3a3a3; box-shadow: inset -1px 0 #949494; display: flex; flex-direction: column; align-items: center; }
.collapse { width: 100%; height: 19px; flex: none; padding: 5px 9px; background: #a3a3a3; border-bottom: 2px solid #949494; }
.both { display: flex; justify-content: space-between; padding: 5px 2px 5px 37px; }
.grip { width: 29px; height: 6px; margin-top: 4px; background: repeating-linear-gradient(90deg, #999 0 1px, transparent 1px 3px); }
.tools { display: grid; grid-template-columns: 46px 46px; grid-template-rows: repeat(14, 1fr); height: 515px; margin: 20px 0 0; align-self: flex-start; padding-left: 8px; flex: none; }
.tools button { position: relative; }
.tools .active { background: #989897; box-shadow: inset 0 0 0 1px #808080; border-radius: 3px; }
.tools .more::after { content: ""; position: absolute; right: 2px; bottom: 1px; border: 3px solid transparent; border-right-color: #222; border-bottom-color: #222; }
.colors { width: 92px; margin-top: 3px; padding-top: 6px; border-top: 1px solid #a8a8a8; align-self: flex-start; margin-left: 8px; }
.modes { display: flex; width: 91px; height: 32px; margin: 6px 0 0 8px; align-self: flex-start; border: 2px solid #a8a8a8; border-radius: 2px; }
.modes button { flex: 1; border-left: 1px solid #a8a8a8; }
.modes .active { flex: none; width: 27px; background: #969695; border: 0; }
.modes i { width: 20px; height: 20px; border: 2px solid #000; background: #fff; }
.modes .m-grad { background: linear-gradient(90deg, #eee, #333); }
.modes .m-none { background: linear-gradient(135deg, #fff 43%, #ec1c24 43% 57%, #fff 57%); }
.modes.draw { height: 30px; margin-top: 7px; }
.screen { margin: 11px 0 0; }
.dots { gap: 2px; margin-top: 33px; }
.dots i { width: 6px; height: 6px; border-radius: 50%; background: #404241; }

.doc { flex: 1; min-width: 0; display: flex; flex-direction: column; }
.tabs { height: 45px; background: #a3a3a3; border-bottom: 2px solid #8d8d8d; flex: none; }
.tab { display: inline-flex; align-items: center; height: 43px; padding: 0 18px 2px 12px; background: #b8b8b8; border-right: 2px solid #949494; font-weight: 700; color: #444; }
.tab button { margin-right: 15px; }
.view { flex: 1; display: flex; min-height: 0; }
.canvas { flex: 1; display: flex; background: linear-gradient(#7a7c7b calc(100% - 110px), #737373); padding: 60px 0 0 363px; min-width: 0; justify-content: flex-start; }
.artboard { width: 810px; flex: none; border: 1px solid #000; border-bottom: 0; background: linear-gradient(#fff calc(100% - 45px), #f3f2f2); }
.vscroll { width: 24px; background: #c5c5c5; display: flex; flex-direction: column; align-items: center; justify-content: space-between; padding: 9px 0 8px; }
.vscroll i { width: 22px; height: 38px; margin-bottom: 8px; border-radius: 11px; background: #9b9b9b; }
.status { height: 26px; display: flex; align-items: center; background: #a0a0a0; flex: none; padding-left: 5px; overflow: hidden; }
.status .combo { height: 25px; border-color: #b0b0b0; padding-top: 2px; }
.s1 { width: 106px; margin-right: 6px; }
.s2 { width: 89px; }
.nav { margin: 0 13px 0 7px; }
.s2 + .nav { margin: 0 11px 0 14px; }
.tool-name { width: 310px; text-align: center; border: 1px solid #989898; border-width: 0 1px; line-height: 26px; padding-top: 3px; }
.play { margin: 0 8px; }
.hscroll { flex: 1; height: 100%; background: linear-gradient(#bababa, #adadad); border-right: 24px solid #a2a2a2; display: flex; align-items: center; justify-content: space-between; padding: 0 9px 0 10px; }
.hscroll i { width: 38px; height: 23px; border-radius: 11px; background: #9b9b99; }

.dock { width: 478px; flex: none; display: flex; flex-direction: column; border-left: 5px solid #a8a8a8; box-shadow: inset 1px 0 #949494; }
.dock-cols { flex: 1; display: flex; min-height: 0; }
.strip { width: 58px; flex: none; border-right: 1px solid #949494; border-left: 1px solid #949494; background: linear-gradient(#b8b8b8 calc(100% - 130px), #a0a0a0); }
.group { display: flex; flex-direction: column; align-items: center; border-bottom: 2px solid #949494; padding-bottom: 3px; }
.group .grip { margin-bottom: 6px; }
.group button { height: 42px; }
.group:first-child { padding-bottom: 5px; }
.panels { flex: 1; min-width: 0; margin-left: 2px; border-left: 1px solid #949494; display: flex; flex-direction: column; gap: 4px; background: #a8a8a8; }
.panel { background: #b8b8b8; border-bottom: 1px solid #949494; }
.ptabs { display: flex; height: 41px; background: #a3a3a3; border-top: 1px solid #949494; flex: none; }
.ptabs button { padding: 0 12px 4px; border-right: 2px solid #949494; border-bottom: 2px solid #949494; font-weight: 700; color: #6a6a6a; gap: 7px; }
.ptabs .on { background: #b8b8b8; color: #3b3b3b; border-bottom: 0; padding: 0 13px 5px 14px; }
.ptabs .on svg { margin-left: -6px; }
.menu { flex: 1; border-bottom: 2px solid #949494; background: linear-gradient(#444 0 2px, transparent 2px 5px, #444 5px 7px, transparent 7px 10px, #444 10px) right 2px top 14px / 15px 12px no-repeat; }

.transform { height: 398px; color: #a0a0a0; }
.tbody { display: flex; align-items: flex-start; margin-left: 8px; padding: 10px 0 7px; border-bottom: 2px solid #acacac; }
.tbody > svg { margin-top: 21px; }
.tgrid { display: grid; grid-template-columns: 36px 103px 23px 103px; column-gap: 4px; row-gap: 8px; align-items: center; }
.tgrid label { display: flex; justify-content: flex-end; align-items: center; gap: 2px; }
input:disabled, .drop { background: #aeaeae; border-radius: 3px; color: #9a9a9a; }
.tgrid input { height: 32px; padding-left: 8px; width: 100%; }
.drop { position: relative; width: 96px; height: 32px; display: flex; align-items: center; }
.drop select { width: 100%; height: 100%; padding-left: 7px; opacity: 1; }
.drop svg { position: absolute; right: 10px; pointer-events: none; }
.tbody .unlink { margin: 21px 0 0 12px; }
.empty { margin: 100px 0 0; padding-left: 4px; text-align: center; font-size: 15px; line-height: 24px; }

.shead { display: flex; justify-content: space-between; padding: 9px 0 8px 8px; }
.views { display: flex; width: 78px; height: 36px; border: 2px solid #a8a8a8; border-radius: 3px; margin-right: -1px; }
.views button { flex: 1; }
.views .active { background: #969695; }
.sgrid { display: flex; justify-content: space-between; margin-left: 8px; padding-right: 2px; border: 2px solid #a5a5a5; border-right: 0; height: 70px; }
.chips { display: grid; grid-template-columns: repeat(17, 1fr); grid-template-rows: repeat(3, 1fr); gap: 1px; width: 365px; height: 64px; }
.chips i { position: relative; }
.chips .picked { border: 2px solid #000; }
.chips svg { width: 100%; height: 100%; overflow: hidden; }
.chips .none { background: linear-gradient(135deg, #fff 44%, #e0202c 44% 56%, #fff 56%); }
.chips .reg { background: #eee; }
.chips .fade { background: linear-gradient(90deg, #fff, #222); }
.chips .sun { background: linear-gradient(90deg, #f9e300, #f9b000 50%, #e5502a); }
.chips .sky { background: linear-gradient(90deg, #1a80c8, #7fb4dc 50%, #e5ebf0); }
.chips .dot { background: radial-gradient(circle, #d8d8d8 5px, #fff 6px, #111 9px); }
.chips .leaf { background: #f4f8ea; }
.chips .swirl { background: #a4713f; }
.mini { width: 18px; background: #c4c4c4; display: flex; flex-direction: column; align-items: center; justify-content: space-between; padding: 5px 0; }
.pfoot { display: flex; align-items: center; height: 29px; padding: 0 33px 0 15px; gap: 20px; color: #404241; }
.pfoot button:nth-child(3) { margin-left: auto; }
.pfoot button:nth-child(1), .pfoot button:nth-child(3) { position: relative; }
.pfoot button:nth-child(1)::after, .pfoot button:nth-child(3)::after { content: ""; position: absolute; right: -4px; bottom: 0; border: 2px solid transparent; border-top-color: #404241; }

.srow { display: flex; align-items: center; height: 41px; color: #a0a0a0; }
.ptabs + .srow { height: 52px; }
.ptabs + .srow + .srow { margin-top: -5px; }
.srow > label:first-child, .lab { width: 104px; margin-right: 5px; text-align: right; flex: none; }
.dark { color: #222; }
.w-weight { width: 146px; color: #222; }
.trio, .duo { display: flex; border: 2px solid #a6a6a6; border-radius: 2px; flex: none; }
.trio button { width: 31px; height: 29px; }
.trio button + button, .duo button + button { border-left: 2px solid #a6a6a6; width: 35px; }
.limit { margin: 0 5px 0 69px; }
.limit-in { width: 67px; height: 32px; }
.times { margin-left: 6px; }
.dline { display: flex; justify-content: space-between; align-items: center; margin: 4px 0 0 8px; padding-top: 9px; border-top: 2px solid #acacac; }
.dline label { display: flex; align-items: center; color: #000; gap: 8px; }
.dline input { width: 19px; height: 19px; border-radius: 3px; border: 5px solid #444; border-width: 8px 5px; background: #e8e8e8; }
.duo button, .duo button + button { width: 58px; height: 29px; }
.dashes { display: grid; grid-template-columns: repeat(6, 54px); justify-content: space-between; padding: 8px 6px 0 12px; color: #a0a0a0; }
.dashes label { display: flex; flex-direction: column; align-items: center; line-height: 26px; }
.dashes input { width: 100%; height: 32px; padding-left: 8px; }
.strokep { height: 332px; }

.artboards { flex: 1; display: flex; flex-direction: column; }
.alist { flex: 1; margin: 10px 0 0 8px; border: 2px solid #a8a8a8; border-right: 0; border-radius: 3px 0 0 3px; }
.arow { display: flex; align-items: center; height: 31px; border-bottom: 2px solid #a8a8a8; color: #000; }
.num { width: 62px; padding-left: 9px; border-right: 1px solid #a8a8a8; line-height: 29px; }
.name { flex: 1; padding-left: 8px; line-height: 29px; }
.arow button { width: 64px; height: 29px; padding-right: 26px; border-left: 1px solid #a8a8a8; }
.afoot { display: flex; align-items: center; height: 30px; gap: 22px; padding: 0 35px 0 18px; }
.push { flex: 1; }

.callout { position: absolute; right: 1px; bottom: 0; width: 464px; height: 281px; border: 12px solid #c20c20; border-bottom-width: 13px; }
.callout p { position: absolute; left: 17px; top: 87px; margin: 0; font: 700 48px/72px "Noto Sans CJK KR", sans-serif; white-space: nowrap; color: #222; }
.finger { position: absolute; right: 11px; top: 102px; }
.focus { position: absolute; right: 3px; top: 34px; width: 84px; height: 72px; border: 15px solid #ef2424; border-width: 14px 15px; }
</style>
